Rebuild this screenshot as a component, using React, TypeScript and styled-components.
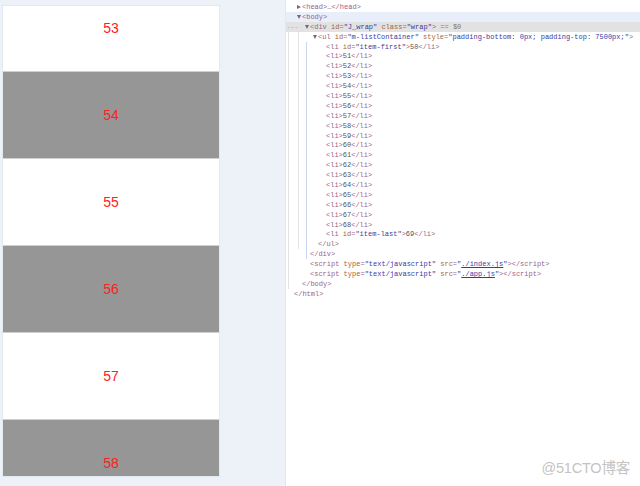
import React from 'react';
import styled, { createGlobalStyle } from 'styled-components';

const GlobalStyle = createGlobalStyle`
  html, body {
    margin: 0;
    padding: 0;
    width: 640px;
    height: 486px;
    overflow: hidden;
    background: #ffffff;
  }
`;

const StyledPage = styled.div`
  position: relative;
  display: flex;
  width: 640px;
  height: 486px;
  overflow: hidden;
`;

const StyledViewport = styled.div`
  flex: 0 0 286px;
  padding: 6px 0 0 3px;
  box-sizing: border-box;
  background: #edf1f8;
  border-right: 1px solid #e4e7ec;
`;

const StyledListFrame = styled.div`
  width: 216px;
  height: 470px;
  overflow: hidden;
  background: #fff;
  box-shadow: 0 0 0 1px #e3e8f1;
`;

const StyledList = styled.ul`
  list-style: none;
  margin: -21px 0 0;
  padding: 0;
`;

const StyledItem = styled.li<{ $dark: boolean }>`
  display: flex;
  align-items: center;
  justify-content: center;
  height: 87px;
  box-sizing: border-box;
  border-bottom: 1px solid #cfcfcf;
  background: ${({ $dark }) => ($dark ? '#969696' : '#ffffff')};
  color: #ff2020;
  font-family: 'Liberation Sans', Arial, sans-serif;
  font-size: 14px;
`;

const StyledDevtools = styled.div`
  flex: 1;
  padding-top: 2px;
  background: #fff;
  font-family: 'Liberation Mono', 'DejaVu Sans Mono', monospace;
  font-size: 7px;
  color: #555;
`;

const StyledRow = styled.div<{ $level: number; $tone?: 'body' | 'selected'; $guides: number[] }>`
  position: relative;
  display: flex;
  align-items: center;
  height: 9.9px;
  padding-left: ${({ $level }) => 2 + $level * 8}px;
  white-space: nowrap;
  background: ${({ $guides, $tone }) => {
    const layers = $guides.map(
      (x) => `linear-gradient(${x > 15 ? '#c9d6ef' : '#e3e3e3'}, ${x > 15 ? '#c9d6ef' : '#e3e3e3'}) no-repeat ${x}px 0 / 1px 100%`
    );
    const base = $tone === 'selected' ? '#e2e2e2' : $tone === 'body' ? '#e9effa' : 'transparent';
    return [...layers, base].join(', ');
  }};
`;

const StyledDots = styled.span`
  position: absolute;
  left: 1px;
  color: #888;
  font-size: 6px;
`;

const StyledCaret = styled.span<{ $open?: boolean }>`
  display: inline-block;
  width: 6px;
  flex: 0 0 6px;
  &::before {
    content: '';
    display: ${({ $open }) => ($open === undefined ? 'none' : 'block')};
    width: 0;
    height: 0;
    margin-left: 1px;
    ${({ $open }) =>
      $open
        ? 'border-left: 2.5px solid transparent; border-right: 2.5px solid transparent; border-top: 4px solid #6e6e6e;'
        : 'border-top: 2.5px solid transparent; border-bottom: 2.5px solid transparent; border-left: 4px solid #6e6e6e;'}
  }
`;

const Tag = styled.span`
  color: #97648c;
`;
const Attr = styled.span`
  color: #a0653a;
`;
const Val = styled.span`
  color: #3b3ba0;
`;
const Link = styled.span`
  color: #3b3ba0;
  text-decoration: underline;
`;
const Muted = styled.span`
  color: #7a7a7a;
`;

const Watermark = styled.div`
  position: absolute;
  right: 10px;
  bottom: 9px;
  color: #c4c4c4;
  font-family: 'Liberation Sans', 'Noto Sans CJK SC', sans-serif;
  font-size: 14.5px;
  letter-spacing: -0.2px;
`;

const items = [53, 54, 55, 56, 57, 58];

type Line = {
  level: number;
  caret?: boolean;
  tone?: 'body' | 'selected';
  guides: number[];
  content: React.ReactNode;
};

const li = (n: number): Line => ({
  level: 4,
  guides: [2, 12, 20],
  content: (
    <>
      <Tag>&lt;li&gt;</Tag>
      {n}
      <Tag>&lt;/li&gt;</Tag>
    </>
  ),
});

const lines: Line[] = [
  {
    level: 1,
    caret: false,
    guides: [],
    content: (
      <>
        <Tag>&lt;head&gt;</Tag>…<Tag>&lt;/head&gt;</Tag>
      </>
    ),
  },
  { level: 1, caret: true, tone: 'body', guides: [], content: <Tag>&lt;body&gt;</Tag> },
  {
    level: 2,
    caret: true,
    tone: 'selected',
    guides: [],
    content: (
      <>
        <Tag>&lt;div </Tag>
        <Attr>id</Attr>
        <Tag>=</Tag>
        <Val>"J_wrap"</Val> <Attr>class</Attr>
        <Tag>=</Tag>
        <Val>"wrap"</Val>
        <Tag>&gt;</Tag> <Muted>== $0</Muted>
      </>
    ),
  },
  {
    level: 3,
    caret: true,
    guides: [2, 12],
    content: (
      <>
        <Tag>&lt;ul </Tag>
        <Attr>id</Attr>
        <Tag>=</Tag>
        <Val>"m-listContainer"</Val> <Attr>style</Attr>
        <Tag>=</Tag>
        <Val>"padding-bottom: 0px; padding-top: 7500px;"</Val>
        <Tag>&gt;</Tag>
      </>
    ),
  },
  {
    level: 4,
    guides: [2, 12, 20],
    content: (
      <>
        <Tag>&lt;li </Tag>
        <Attr>id</Attr>
        <Tag>=</Tag>
        <Val>"item-first"</Val>
        <Tag>&gt;</Tag>50<Tag>&lt;/li&gt;</Tag>
      </>
    ),
  },
  ...Array.from({ length: 18 }, (_, i) => li(51 + i)),
  {
    level: 4,
    guides: [2, 12, 20],
    content: (
      <>
        <Tag>&lt;li </Tag>
        <Attr>id</Attr>
        <Tag>=</Tag>
        <Val>"item-last"</Val>
        <Tag>&gt;</Tag>69<Tag>&lt;/li&gt;</Tag>
      </>
    ),
  },
  { level: 3, guides: [2, 12, 20], content: <Tag>&lt;/ul&gt;</Tag> },
  { level: 2, guides: [2, 20], content: <Tag>&lt;/div&gt;</Tag> },
  {
    level: 2,
    guides: [2],
    content: (
      <>
        <Tag>&lt;script </Tag>
        <Attr>type</Attr>
        <Tag>=</Tag>
        <Val>"text/javascript"</Val> <Attr>src</Attr>
        <Tag>=</Tag>
        <Val>"</Val>
        <Link>./index.js</Link>
        <Val>"</Val>
        <Tag>&gt;&lt;/script&gt;</Tag>
      </>
    ),
  },
  {
    level: 2,
    guides: [2],
    content: (
      <>
        <Tag>&lt;script </Tag>
        <Attr>type</Attr>
        <Tag>=</Tag>
        <Val>"text/javascript"</Val> <Attr>src</Attr>
        <Tag>=</Tag>
        <Val>"</Val>
        <Link>./app.js</Link>
        <Val>"</Val>
        <Tag>&gt;&lt;/script&gt;</Tag>
      </>
    ),
  },
  { level: 1, guides: [2], content: <Tag>&lt;/body&gt;</Tag> },
  { level: 0, guides: [], content: <Tag>&lt;/html&gt;</Tag> },
];

export default function App() {
  return (
    <>
      <GlobalStyle />
      <StyledPage>
        <StyledViewport>
          <StyledListFrame>
            <StyledList>
              {items.map((n) => (
                <StyledItem key={n} $dark={n % 2 === 0}>
                  {n}
                </StyledItem>
              ))}
            </StyledList>
          </StyledListFrame>
        </StyledViewport>
        <StyledDevtools>
          {lines.map((line, i) => (
            <StyledRow key={i} $level={line.level} $tone={line.tone} $guides={line.guides}>
              {line.tone === 'selected' && <StyledDots>...</StyledDots>}
              <StyledCaret $open={line.caret} />
              <span>{line.content}</span>
            </StyledRow>
          ))}
        </StyledDevtools>
        <Watermark>@51CTO博客</Watermark>
      </StyledPage>
    </>
  );
}
